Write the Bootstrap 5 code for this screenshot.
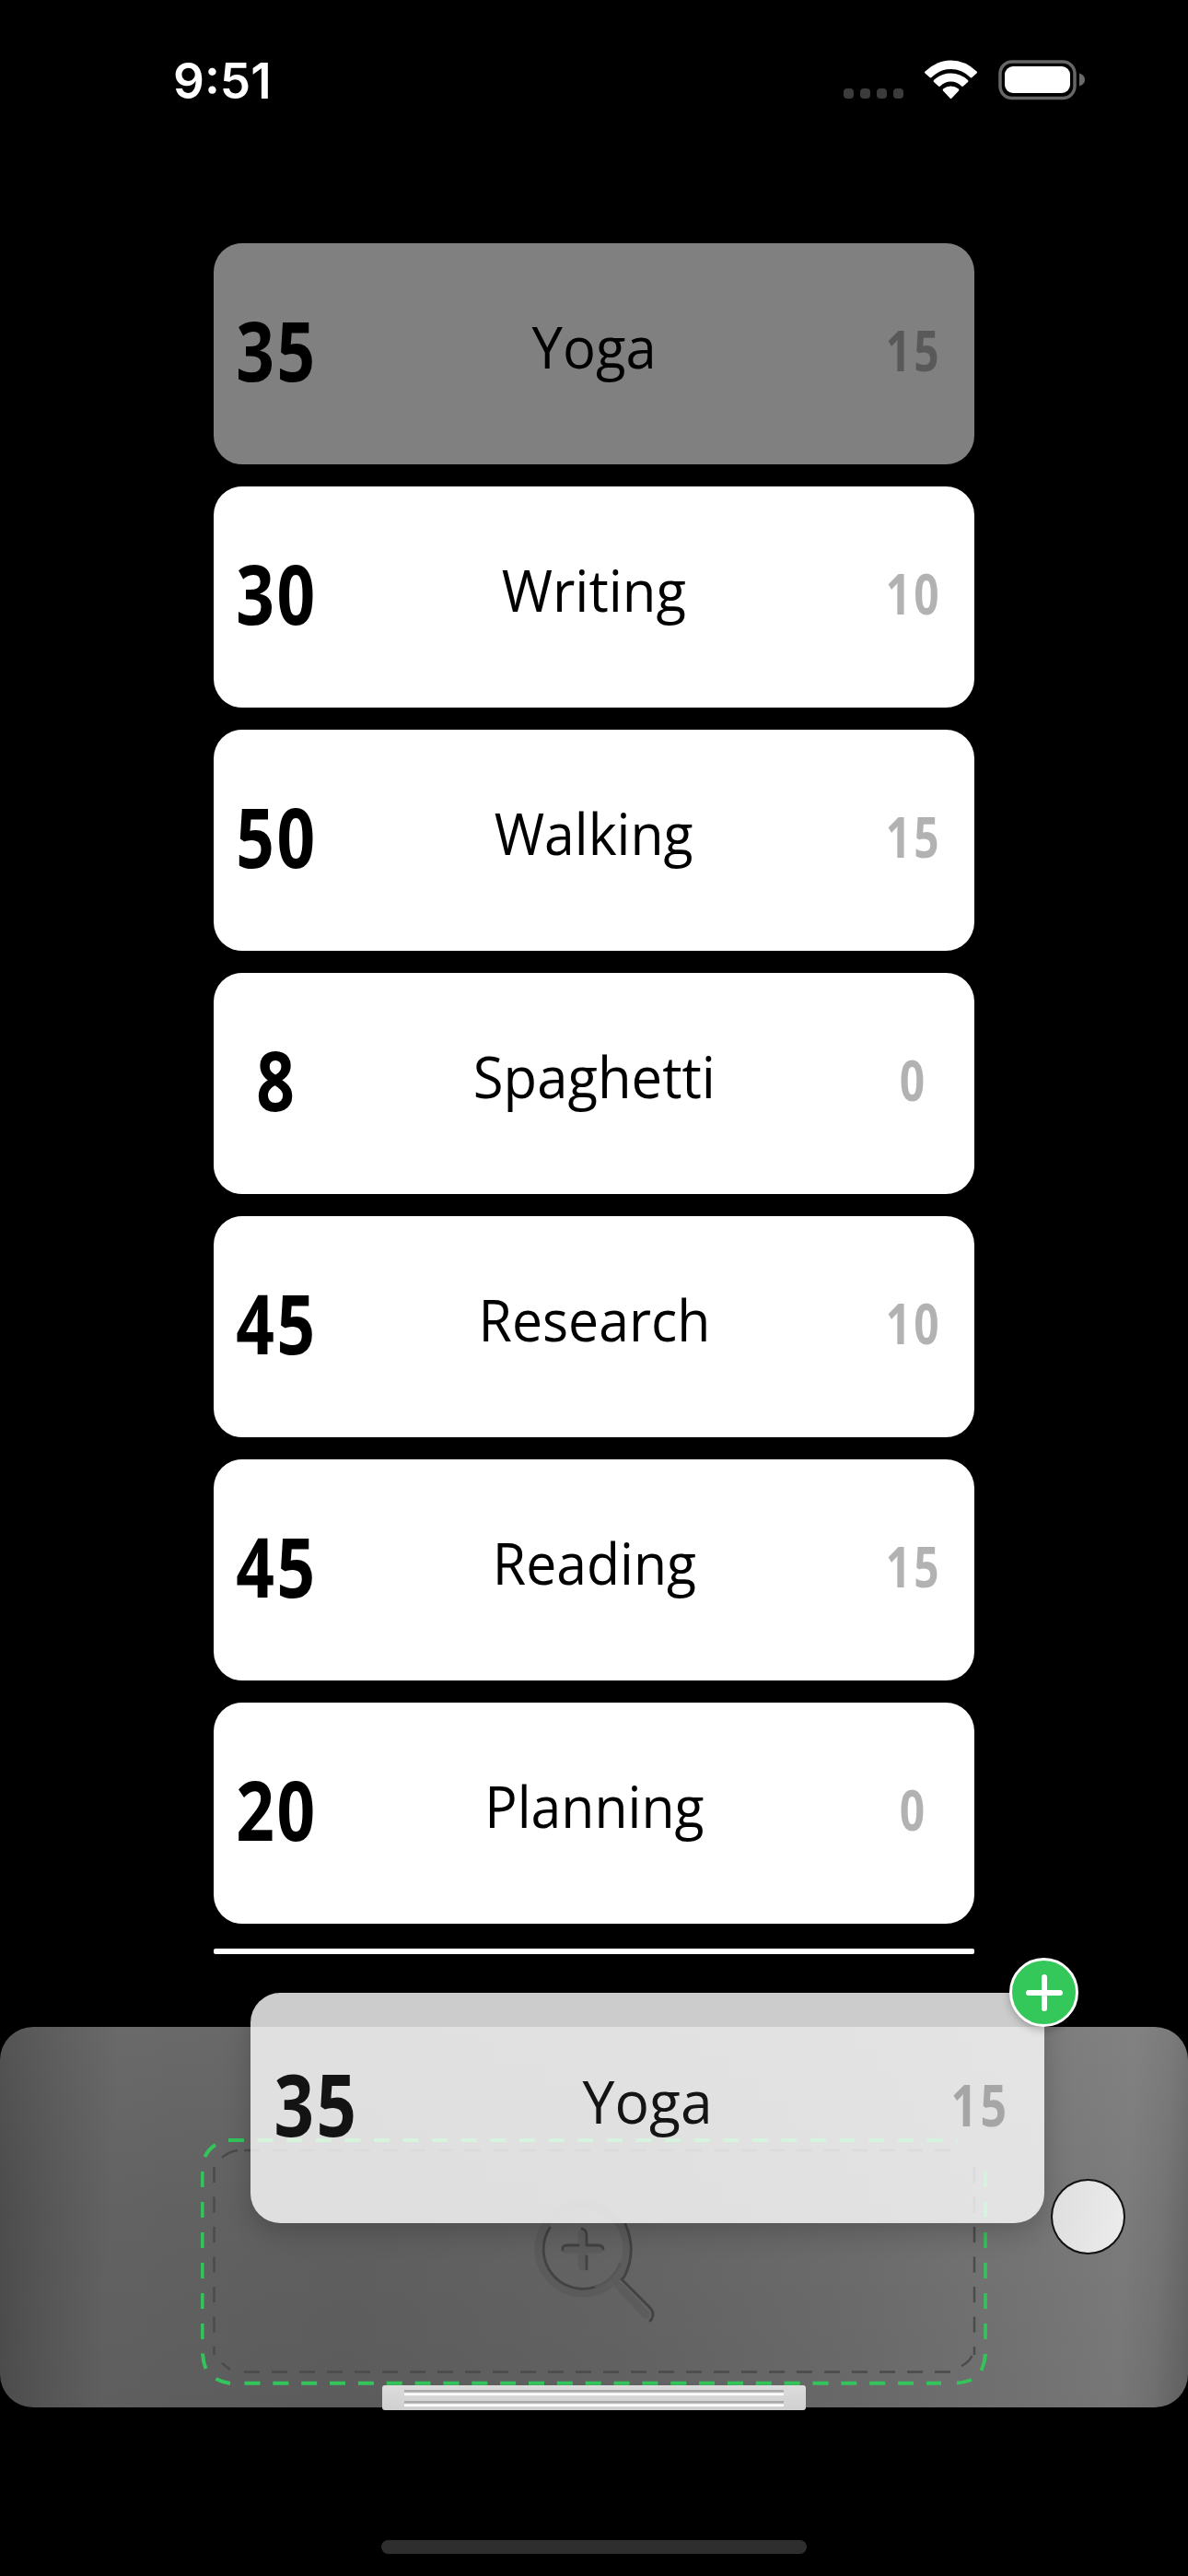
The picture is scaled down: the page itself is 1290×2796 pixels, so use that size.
<!DOCTYPE html>
<html lang="en">
<head>
<meta charset="utf-8">
<meta name="viewport" content="width=device-width, initial-scale=1">
<title>Activities</title>
<link href="https://cdn.jsdelivr.net/npm/bootstrap@5.3.0/dist/css/bootstrap.min.css" rel="stylesheet">
<style>
  body { background: #000; }
  .screen { width: 1290px; height: 2796px; overflow: hidden; background: #000; font-family: "Open Sans", "Noto Sans", sans-serif; }
  .status { height: 264px; padding: 56px 111px 0 188px; }
  .clock { font: 600 53px/64px Inter, "Liberation Sans", sans-serif; color: #fff; letter-spacing: 0; }
  .tasks { width: 826px; gap: 24px; }
  .task { height: 240px; border-radius: 31px; background: #fff; color: #000; line-height: normal; }
  .task.lifted { background: #808080; }
  .side { width: 134px; flex: none; }
  .minutes { font-size: 90px; font-weight: 700; padding-bottom: 10px; }
  .minutes span { display: inline-block; transform: scaleX(.81); letter-spacing: 3px; margin-right: -3px; }
  .pause { font-size: 60px; font-weight: 700; color: rgba(0,0,0,.3); padding-bottom: 8px; }
  .pause span { display: inline-block; transform: translateX(-1px) scaleX(.8); letter-spacing: 4px; margin-right: -4px; }
  .title { font-size: 62px; font-weight: 400; padding-bottom: 16px; }
  .title span { display: inline-block; transform: scaleX(.95); }
  .title .wide { transform: scaleX(.965); }
  .insert-line { width: 826px; height: 6px; border-radius: 2px; background: #fff; margin-top: 27px; }
  .drawer { height: 413px; margin-top: 79px; border-radius: 36px;
    background:
      linear-gradient(180deg, rgba(255,255,255,.05), rgba(255,255,255,0) 50%, rgba(0,0,0,.04)),
      linear-gradient(93deg, #4a4a4a 0, #575757 5%, #626262 10%, #616161 17%, #5f5f5f 30%, #646464 52%, #6c6c6c 72%, #747474 85%, #7b7b7b 94%, #747474 97%, #626262 100%); }
  .grip { left: 415px; bottom: -3px; width: 460px; height: 27px; border-radius: 3px; background: linear-gradient(#dcdcdc, #d0d0d0); padding: 5px 24px 4px; }
  .groove { height: 6px; background: linear-gradient(#a9a9a9 0 2px, #d8d8d8 3px, #fff 4px, #fff); }
  .home-bar { width: 462px; height: 15px; border-radius: 8px; background: #2e2e2e; margin-top: 144px; }
  .floating { left: 272px; top: 2163px; width: 862px; height: 250px; z-index: 2; }
  .floating .task { transform: scale(1.0436, 1.0417); transform-origin: 0 0; width: 826px; opacity: .8; box-shadow: 0 10px 26px rgba(0,0,0,.22); }
  .floating .pause { padding-right: 2px; }
  .plus { right: -37px; top: -38px; width: 75px; height: 75px; border-radius: 50%; background: #34c759; border: 3.5px solid #fff; box-shadow: 0 3px 10px rgba(0,0,0,.25); }
  .touch { left: 1141px; top: 2365px; width: 81px; height: 82px; border-radius: 50%; border: 2px solid #111; background: linear-gradient(100deg, #dedede, #ececec); z-index: 3; }
</style>
<script src="https://cdn.jsdelivr.net/npm/bootstrap@5.3.0/dist/js/bootstrap.bundle.min.js"></script>
</head>
<body>
<div class="screen position-relative d-flex flex-column align-items-center">
  <header class="status w-100 d-flex justify-content-between align-items-start">
    <div class="clock">9:51</div>
    <svg width="264" height="64" viewBox="915 56 264 64">
      <g fill="#3b3b3b"><rect x="916" y="96" width="11" height="11" rx="4"/><rect x="934" y="96" width="11" height="11" rx="4"/><rect x="952" y="96" width="11" height="11" rx="4"/><rect x="970" y="96" width="11" height="11" rx="4"/></g>
      <g fill="#fff">
        <path d="M1004.5 77.5Q1003.500 78.500 1004.500 79.500L1009.500 84Q1010.500 84.800 1011.500 84Q1020.500 75 1032.500 75Q1044.500 75 1053.500 84Q1054.500 84.800 1055.500 84L1060.500 79.500Q1061.500 78.500 1060.500 77.500Q1048 65.500 1032.500 65.500Q1017 65.500 1004.500 77.500Z"/>
        <path d="M1014 87Q1013.200 88 1014 89L1019 93.500Q1020 94.300 1021 93.500Q1026 88.500 1032.500 88.500Q1039 88.500 1044 93.500Q1045 94.300 1046 93.500L1051 89Q1051.800 88 1051 87Q1043 79.500 1032.500 79.500Q1022 79.500 1014 87Z"/>
        <path d="M1024 96.500Q1023.200 97.500 1024 98.500L1031.500 106.500Q1032.500 107.500 1033.500 106.500L1041 98.500Q1041.800 97.500 1041 96.500Q1037 93.500 1032.500 93.500Q1028 93.500 1024 96.500Z"/>
        <rect x="1091" y="72" width="71" height="29" rx="9"/>
      </g>
      <rect x="1086" y="67" width="81" height="39.500" rx="13" fill="none" stroke="#666" stroke-width="3.500"/>
      <path d="M1172 79.500Q1178 81.500 1178 86.500Q1178 91.500 1172 93.500Z" fill="#6b6b6b"/>
    </svg>
  </header>

  <main class="tasks d-flex flex-column">
    <div class="task lifted d-flex align-items-center text-center"><div class="side minutes"><span>35</span></div><div class="title flex-fill"><span class="wide">Yoga</span></div><div class="side pause"><span>15</span></div></div>
    <div class="task d-flex align-items-center text-center"><div class="side minutes"><span>30</span></div><div class="title flex-fill"><span class="wide">Writing</span></div><div class="side pause"><span>10</span></div></div>
    <div class="task d-flex align-items-center text-center"><div class="side minutes"><span>50</span></div><div class="title flex-fill"><span>Walking</span></div><div class="side pause"><span>15</span></div></div>
    <div class="task d-flex align-items-center text-center"><div class="side minutes"><span>8</span></div><div class="title flex-fill"><span class="wide">Spaghetti</span></div><div class="side pause"><span>0</span></div></div>
    <div class="task d-flex align-items-center text-center"><div class="side minutes"><span>45</span></div><div class="title flex-fill"><span>Research</span></div><div class="side pause"><span>10</span></div></div>
    <div class="task d-flex align-items-center text-center"><div class="side minutes"><span>45</span></div><div class="title flex-fill"><span>Reading</span></div><div class="side pause"><span>15</span></div></div>
    <div class="task d-flex align-items-center text-center"><div class="side minutes"><span>20</span></div><div class="title flex-fill"><span>Planning</span></div><div class="side pause"><span>0</span></div></div>
  </main>
  <div class="insert-line"></div>

  <section class="drawer w-100 position-relative">
    <svg class="d-block" width="1290" height="413" viewBox="0 2200 1290 413" fill="none">
      <!-- inner outline -->
      <g stroke="#4b4b4b" stroke-width="2.500">
        <path d="M265 2574.500H1036M265 2334H1036" stroke-dasharray="17 13"/>
        <path d="M232.500 2352V2556M1058 2352V2556" stroke-dasharray="17 15.500"/>
        <path d="M241 2342Q248 2335.500 258 2334M241 2565L250 2572M1044 2568Q1052 2564 1055.500 2557"/>
      </g>
      <!-- drop target outline -->
      <g stroke="#34c45c" stroke-width="4">
        <path d="M265.500 2586.700H1022" stroke-dasharray="17 13.850"/>
        <path d="M248 2323H1040" stroke-dasharray="17 14.600"/>
        <path d="M219.800 2357V2540M1070 2357V2545" stroke-dasharray="17 16" stroke-width="3.500"/>
        <path d="M222.500 2341Q226.500 2332.500 234 2328M220 2554.500Q220.500 2563 223.500 2571M234.500 2582Q241 2585.500 250 2587M1070 2555Q1069.500 2564 1065.500 2573M1039 2586.500Q1047 2586 1055 2583"/>
      </g>
      <!-- magnifier: soft shade, then the engraved edges -->
      <g stroke="#000" stroke-opacity=".07" stroke-width="9" stroke-linecap="round">
        <circle cx="633" cy="2441" r="48"/>
        <path d="M672 2481L701 2512M614 2441H651M632 2424V2460"/>
      </g>
      <g stroke="#424242" stroke-width="2.800" stroke-linecap="round" stroke-linejoin="round">
        <path d="M597 2418A43 43 0 0 0 647 2482" />
        <path d="M647 2482A43 43 0 0 0 673 2457" stroke="#565656"/>
        <path d="M679 2414Q692 2443 678 2471L675 2474L704 2503Q713 2511 706 2519"/>
        <path d="M611 2442Q610 2437 616 2437H628M632 2419Q637 2420 637 2427V2437H648Q655 2437 655 2441M637 2449V2463"/>
      </g>
    </svg>
    <div class="grip position-absolute d-flex flex-column justify-content-between">
      <div class="groove"></div>
      <div class="groove"></div>
    </div>
  </section>
  <div class="home-bar"></div>

  <div class="floating position-absolute">
    <div class="task d-flex align-items-center text-center"><div class="side minutes"><span>35</span></div><div class="title flex-fill"><span class="wide">Yoga</span></div><div class="side pause"><span>15</span></div></div>
    <div class="plus position-absolute d-flex align-items-center justify-content-center">
      <svg width="44" height="44" viewBox="0 0 44 44" stroke="#fff" stroke-width="6" stroke-linecap="round"><path d="M5 22H39M22 5V39"/></svg>
    </div>
  </div>
  <div class="touch position-absolute"></div>
</div>
</body>
</html>
